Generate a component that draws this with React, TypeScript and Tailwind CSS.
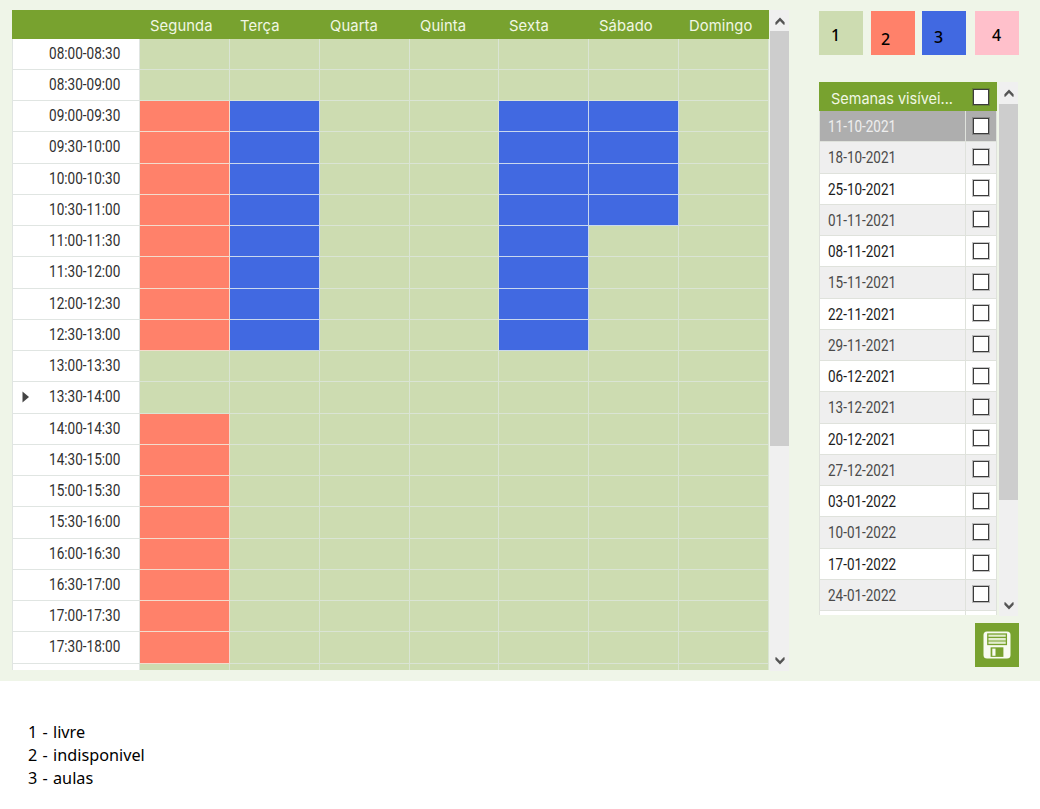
type Status = "free" | "busy" | "class";

const statusColor: Record<Status, string> = {
  free: "bg-[#cddcb1]",
  busy: "bg-[#ff816a]",
  class: "bg-[#4169e1]",
};

const lineColor: Record<Status, string> = {
  free: "border-[#dae4d4]",
  busy: "border-[#f3dccd]",
  class: "border-[#c9d8ee]",
};

const days = ["Segunda", "Terça", "Quarta", "Quinta", "Sexta", "Sábado", "Domingo"];

const slots = [
  "08:00-08:30", "08:30-09:00", "09:00-09:30", "09:30-10:00", "10:00-10:30",
  "10:30-11:00", "11:00-11:30", "11:30-12:00", "12:00-12:30", "12:30-13:00",
  "13:00-13:30", "13:30-14:00", "14:00-14:30", "14:30-15:00", "15:00-15:30",
  "15:30-16:00", "16:00-16:30", "16:30-17:00", "17:00-17:30", "17:30-18:00",
];

const weeks = [
  "11-10-2021", "18-10-2021", "25-10-2021", "01-11-2021", "08-11-2021",
  "15-11-2021", "22-11-2021", "29-11-2021", "06-12-2021", "13-12-2021",
  "20-12-2021", "27-12-2021", "03-01-2022", "10-01-2022", "17-01-2022",
  "24-01-2022",
];

const notes = ["1 - livre", "2 - indisponivel", "3 - aulas"];

function statusAt(row: number, day: number): Status {
  if (day === 0 && ((row >= 2 && row <= 9) || (row >= 12 && row <= 19))) return "busy";
  if ((day === 1 || day === 4) && row >= 2 && row <= 9) return "class";
  if (day === 5 && row >= 2 && row <= 5) return "class";
  return "free";
}

function Arrow({ down = false }: { down?: boolean }) {
  return (
    <svg width="10" height="8" viewBox="0 0 10 8" className={down ? "rotate-180" : ""}>
      <path d="M0.4 5.2 L5 0.4 L9.6 5.2 V7.8 H8.7 L5 4 L1.3 7.8 H0.4 Z" fill="#555" />
    </svg>
  );
}

function Scrollbar({ thumb, top }: { thumb: string; top: string }) {
  return (
    <div className="flex h-full w-[19px] flex-col items-center bg-[#f0f0f0]">
      <div className={`flex w-full shrink-0 items-center justify-center ${top}`}>
        <Arrow />
      </div>
      <div className={`w-full shrink-0 bg-[#cdcdcd] ${thumb}`} />
      <div className="mt-auto flex h-[21px] items-center justify-center">
        <Arrow down />
      </div>
    </div>
  );
}

function Checkbox() {
  return <div className="h-[16px] w-[16px] shrink-0 border border-[#3c3c3c] bg-white shadow-[0_0_0_1px_rgba(60,60,60,0.3)]" />;
}

function Schedule() {
  const columns = "grid grid-cols-[128px_90px_90px_90px_89px_90px_90px_90px]";
  return (
    <div className="flex h-[661px] w-[777px] justify-between">
      <div className="h-[660px] w-[757px] overflow-hidden bg-white">
        <div className={`${columns} h-[28.5px] bg-[#78a22f]`}>
          <div />
          {days.map((day) => (
            <div key={day} className="flex items-start pl-[10px] pt-[6px]">
              <span className="origin-left scale-x-[0.985] font-['Inter',sans-serif] text-[15px] leading-[20px] tracking-[0.1px] text-[#f1f7e4]">
                {day}
              </span>
            </div>
          ))}
        </div>
        {slots.map((slot, row) => (
          <div key={slot} className={`${columns} h-[31.26px]`}>
            <div className="flex items-center border-b border-l border-r border-[#e0e5e2] bg-white">
              <div className="flex w-[36px] justify-center pr-[11px]">
                {row === 11 && (
                  <svg width="8" height="12" viewBox="0 0 8 12">
                    <path d="M0.5 0.5 L7 6 L0.5 11.5 Z" fill="#444" />
                  </svg>
                )}
              </div>
              <span className="origin-left scale-x-[0.865] whitespace-nowrap font-['Roboto',sans-serif] text-[15.7px] leading-[20px] text-[#303030]">
                {slot}
              </span>
            </div>
            {days.map((name, day) => {
              const status = statusAt(row, day);
              return <div key={name} className={`border-b border-r ${statusColor[status]} ${lineColor[status]}`} />;
            })}
          </div>
        ))}
        <div className={`${columns} h-[10px]`}>
          <div className="border-l border-r border-[#e0e5e2] bg-white" />
          {days.map((day) => (
            <div key={day} className="border-r border-[#dae4d4] bg-[#cddcb1]" />
          ))}
        </div>
      </div>
      <Scrollbar top="h-[21px]" thumb="h-[415px]" />
    </div>
  );
}

function Legend() {
  return (
    <div className="flex h-[44px] w-[200px] font-['Noto_Sans',sans-serif] text-[16px] font-medium leading-[20px] text-black">
      <div className="w-[44px] bg-[#cddcb1] pl-[12px] pt-[14px]">1</div>
      <div className="ml-[8px] w-[44px] bg-[#ff816a] pl-[10px] pt-[18px]">2</div>
      <div className="ml-[7px] w-[44px] bg-[#4169e1] pl-[12px] pt-[16px]">3</div>
      <div className="ml-[9px] w-[44px] bg-[#ffc0cb] pl-[17px] pt-[14px]">4</div>
    </div>
  );
}

function Weeks() {
  return (
    <div className="flex h-[534px] w-[199px] justify-between">
      <div className="h-[533px] w-[178px] overflow-hidden bg-white">
        <div className="flex h-[29px] items-center justify-between bg-[#78a22f] pl-[12px] pr-[8px]">
          <span className="w-[130px] origin-left scale-x-[0.965] whitespace-nowrap pt-[4px] font-['Inter',sans-serif] text-[15px] leading-[20px] text-[#f1f7e4]">
            Semanas visívei...
          </span>
          <Checkbox />
        </div>
        {weeks.map((week, i) => {
          const row = i === 0 ? "bg-[#aeaeae] text-[#eeeeee]" : i % 2 ? "bg-[#efefef] text-[#4a4a4a]" : "bg-white text-[#1c1c1c]";
          return (
            <div key={week} className={`flex h-[31.26px] border-b border-l border-r border-[#dfe2dc] ${row}`}>
              <div className="flex w-[146px] items-center border-r border-[#dfe2dc] pl-[7.5px] pt-[2px]">
                <span className="origin-left scale-x-[0.86] whitespace-nowrap font-['Roboto',sans-serif] text-[15.7px] leading-[20px]">{week}</span>
              </div>
              <div className="flex grow items-center justify-center pb-px">
                <Checkbox />
              </div>
            </div>
          );
        })}
        <div className="flex h-[8px] border-l border-r border-[#dfe2dc]">
          <div className="w-[146px] border-r border-[#dfe2dc]" />
        </div>
      </div>
      <Scrollbar top="h-[22px]" thumb="h-[396px]" />
    </div>
  );
}

function SaveButton() {
  return (
    <button type="button" aria-label="Guardar" className="flex h-[44px] w-[44px] items-center justify-center bg-[#78a22f]">
      <svg width="28" height="28" viewBox="0 0 28 28">
        <rect x="0.5" y="0.5" width="27" height="27" rx="3.5" fill="#f8fbf1" />
        <rect x="4.8" y="3" width="18.6" height="10.5" fill="#e3edcf" stroke="#78a22f" strokeWidth="1.3" />
        <path d="M4.8 6.4 H23.4 M4.8 10 H23.4" stroke="#78a22f" strokeWidth="1.2" />
        <rect x="7.6" y="16.3" width="12.8" height="9.6" fill="#78a22f" />
        <rect x="9.3" y="17.6" width="3.2" height="7.2" fill="#f8fbf1" />
      </svg>
    </button>
  );
}

export default function App() {
  return (
    <div className="h-[809px] w-[1040px] overflow-hidden bg-white">
      <div className="flex h-[681px] bg-[#eff5e8] pl-[12px] pt-[10px]">
        <Schedule />
        <div className="ml-[30px] flex w-[200px] flex-col pt-px">
          <Legend />
          <div className="mt-[27px]">
            <Weeks />
          </div>
          <div className="mt-[7px] flex justify-end">
            <SaveButton />
          </div>
        </div>
      </div>
      <div className="pl-[28px] pt-[40px] font-['Noto_Sans',sans-serif] text-[16px] leading-[23px] text-black">
        {notes.map((note) => (
          <div key={note}>
            <span className="inline-block origin-left scale-x-[1.015] [word-spacing:1px]">{note}</span>
          </div>
        ))}
      </div>
    </div>
  );
}
